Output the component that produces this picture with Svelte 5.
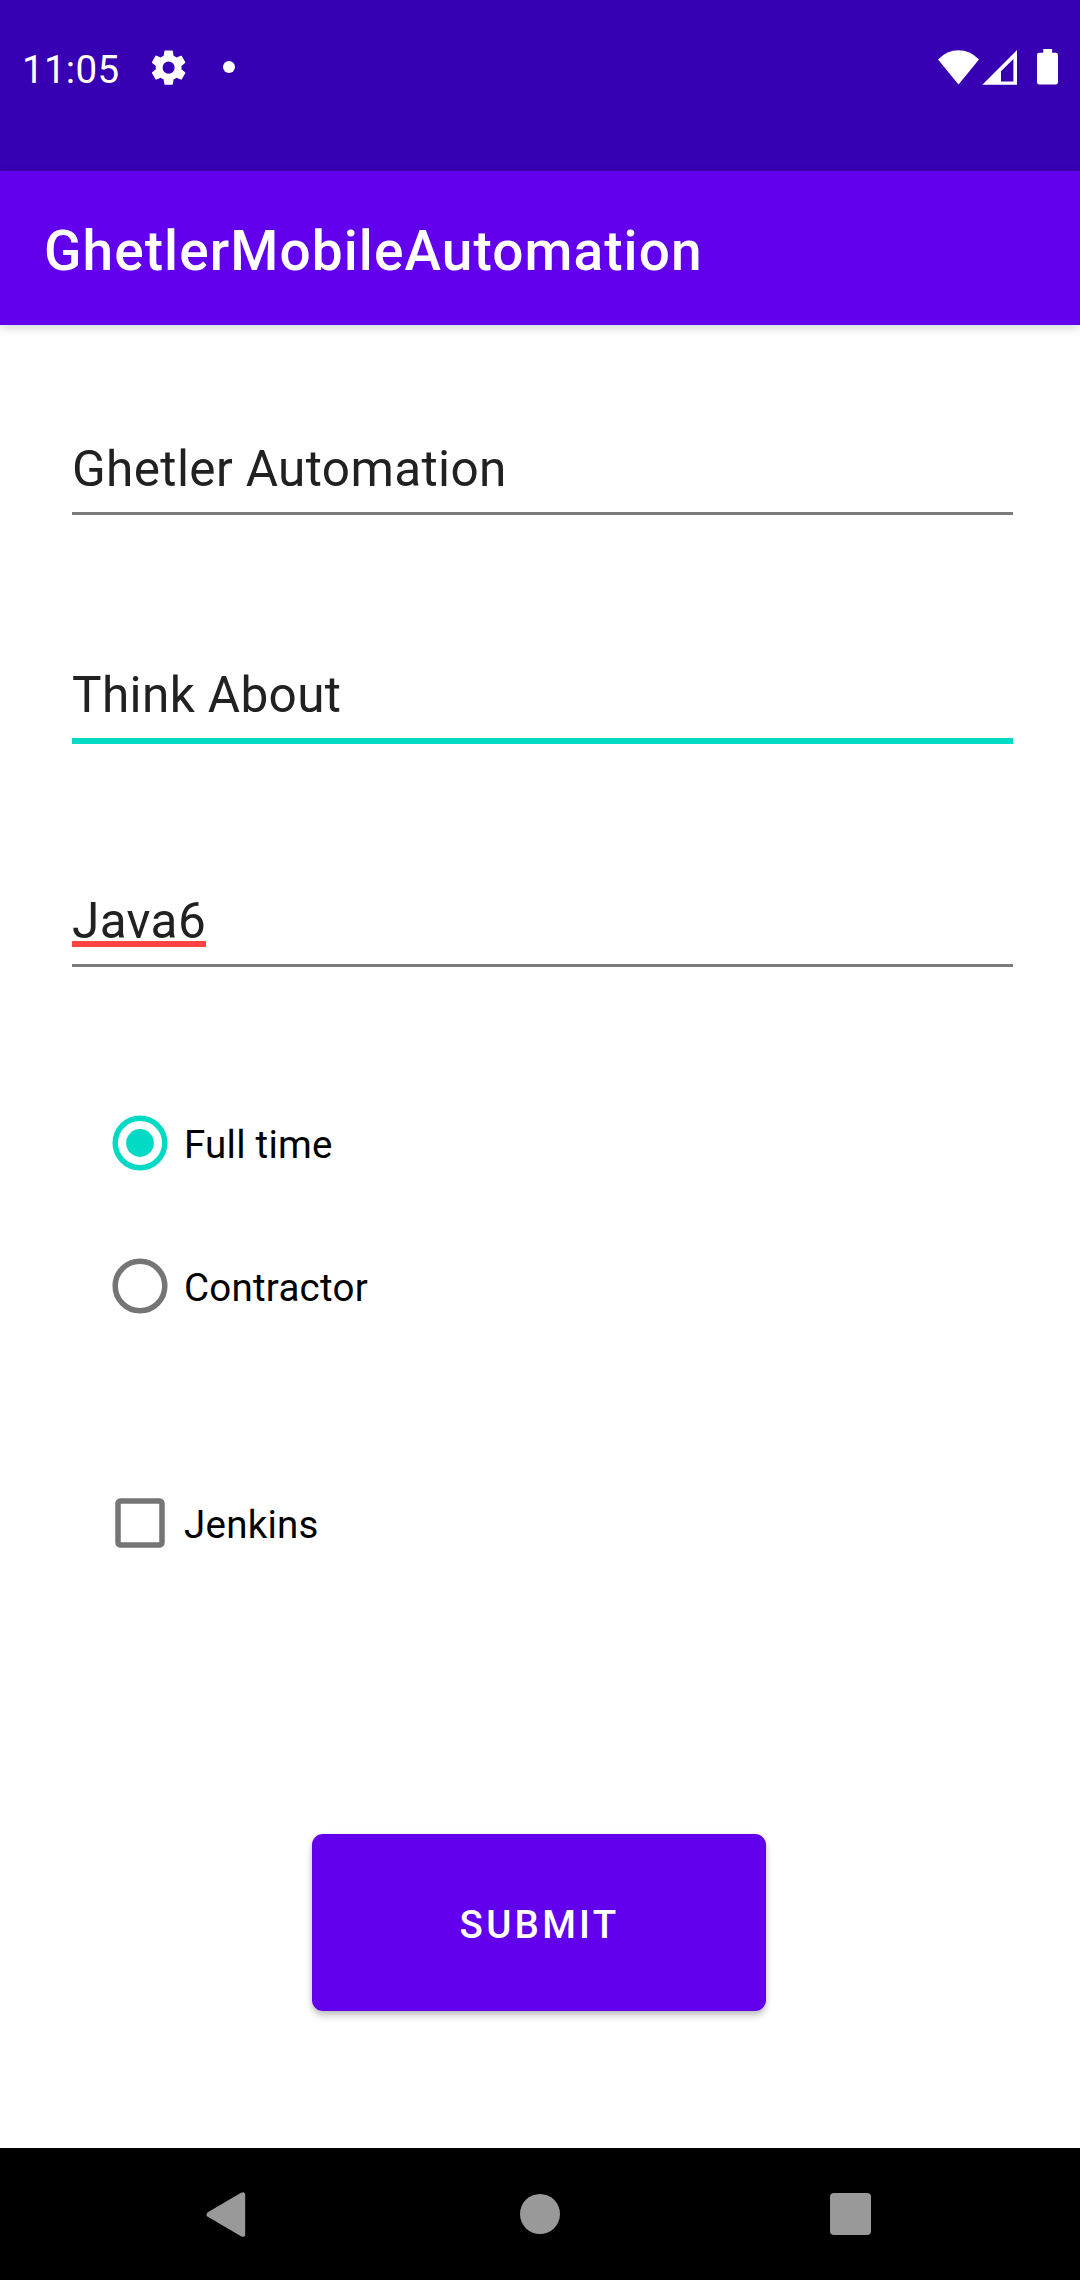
<script>
  const fields = [
    { value: 'Ghetler Automation' },
    { value: 'Think About', focused: true },
    { value: 'Java6', misspelled: true },
  ];
  const contracts = ['Full time', 'Contractor'];
  let selected = $state('Full time');
</script>

<div class="screen">
  <div class="status">
    <span class="clock">11:05</span>
    <svg class="gear" width="41.25" height="41.25" viewBox="0 0 24 24">
      <path fill="#fff" fill-rule="evenodd" d="M19.43 12.98c.04-.32.07-.64.07-.98s-.03-.66-.07-.98l2.11-1.65c.19-.15.24-.42.12-.64l-2-3.46c-.12-.22-.39-.3-.61-.22l-2.49 1c-.52-.4-1.08-.73-1.69-.98l-.38-2.65A.488.488 0 0 0 14 2h-4c-.25 0-.46.18-.49.42l-.38 2.65c-.61.25-1.17.59-1.69.98l-2.49-1c-.23-.09-.49 0-.61.22l-2 3.46c-.13.22-.07.49.12.64l2.11 1.65c-.04.32-.07.65-.07.98s.03.66.07.98l-2.11 1.65c-.19.15-.24.42-.12.64l2 3.46c.12.22.39.3.61.22l2.49-1c.52.4 1.08.73 1.69.98l.38 2.65c.03.24.24.42.49.42h4c.25 0 .46-.18.49-.42l.38-2.65c.61-.25 1.17-.59 1.69-.98l2.49 1c.23.09.49 0 .61-.22l2-3.46c.12-.22.07-.49-.12-.64l-2.11-1.65zM12 15.5a3.5 3.5 0 1 1 0-7 3.5 3.5 0 0 1 0 7z" />
    </svg>
    <span class="dot"></span>
    <svg class="signals" width="122" height="40" viewBox="937 47 122 40">
      <g fill="#fff">
        <path d="M938 59.4Q947 50.3 958.5 50.3T979 59.4L958.5 84.6z" />
        <path fill-rule="evenodd" d="M1017 50v34.7h-34.7zM1013.4 59L1001 71.2v10.2h12.4z" />
        <path d="M1043.3 49h8.8v3.8h3.6q2.3 0 2.3 2.3v27.2q0 2.3-2.3 2.3h-16.4q-2.3 0-2.3-2.3v-27.2q0-2.3 2.3-2.3h4z" />
      </g>
    </svg>
  </div>

  <header class="appbar"><h1>GhetlerMobileAutomation</h1></header>

  <main>
    <div class="fields">
      {#each fields as field}
        <div class="field" class:focused={field.focused}>
          <span class:misspelled={field.misspelled}>{field.value}</span>
        </div>
      {/each}
    </div>

    <div class="radios" role="radiogroup">
      {#each contracts as name}
        <div class="option" class:on={selected === name}>
          <svg width="56" height="56" viewBox="0 0 56 56">
            <circle cx="28" cy="28" r="24.8" fill="none" stroke="currentColor" stroke-width="5.5" />
            {#if selected === name}<circle cx="28" cy="28" r="13.9" fill="currentColor" />{/if}
          </svg>
          <span class="label">{name}</span>
        </div>
      {/each}
    </div>

    <div class="option">
      <svg width="56" height="56" viewBox="0 0 56 56">
        <rect x="6" y="6" width="44" height="44" rx="2.5" fill="none" stroke="currentColor" stroke-width="5.5" />
      </svg>
      <span class="label">Jenkins</span>
    </div>

    <button class="submit">SUBMIT</button>
  </main>

  <nav>
    <svg width="45" height="52" viewBox="203 2188 45 52">
      <path fill="#999" d="M207.4 2212.5L241 2192.8q4.2-2 4.2 2v39.4q0 4-4.2 2L207.4 2216.5q-1.8-2 0-4z" />
    </svg>
    <span class="home"></span>
    <span class="recent"></span>
  </nav>
</div>

<style>
  :global(body) { margin: 0; background: #fff; }
  .screen {
    box-sizing: border-box;
    display: flex;
    flex-direction: column;
    width: 1080px;
    height: 2280px;
    background: #fff;
    font-family: Roboto, sans-serif;
    color: #000;
    overflow: hidden;
  }
  .status {
    box-sizing: border-box;
    display: flex;
    align-items: center;
    height: 171px;
    padding: 0 21px 37px 22px;
    background: #3700b3;
  }
  .clock {
    width: 126px;
    padding-top: 6px;
    font-size: 38.5px;
    line-height: 46px;
    letter-spacing: 0.3px;
    color: #fff;
  }
  .gear { margin-top: 1px; }
  .dot {
    width: 12px;
    height: 12px;
    margin-left: 34px;
    border-radius: 50%;
    background: #fff;
  }
  .signals { margin-left: auto; }
  .appbar {
    box-sizing: border-box;
    display: flex;
    align-items: center;
    height: 154px;
    padding: 6px 44px 0;
    background: #6200ee;
    box-shadow: 0 3px 9px rgba(0, 0, 0, 0.17);
  }
  h1 {
    margin: 0;
    font-size: 55px;
    line-height: 64px;
    font-weight: 500;
    letter-spacing: 1.08px;
    color: #fff;
  }
  main {
    box-sizing: border-box;
    display: flex;
    flex-direction: column;
    height: 1823px;
    padding-top: 114px;
  }
  .fields {
    display: grid;
    grid-template-rows: repeat(3, 226px);
    align-items: start;
    padding: 0 67px 0 72px;
  }
  .field {
    padding-bottom: 13px;
    border-bottom: 3px solid #7a7a7a;
    font-size: 49.5px;
    line-height: 60px;
    letter-spacing: 0.37px;
    color: #212121;
  }
  .field.focused { border-bottom: 6px solid #03dac5; }
  .field span { display: inline-block; height: 60px; vertical-align: top; }
  .misspelled {
    box-sizing: border-box;
    background: linear-gradient(#ff4444, #ff4444) 0 50px / 100% 6px no-repeat;
  }
  .option {
    display: flex;
    align-items: center;
    gap: 16px;
    height: 143px;
    padding-left: 112px;
    color: #757575;
  }
  .option.on { color: #03dac5; }
  .label {
    padding-top: 4px;
    font-size: 38.5px;
    line-height: 46px;
    letter-spacing: 0.25px;
    color: #000;
  }
  .radios { margin-top: -46px; margin-bottom: 94px; }
  .submit {
    width: 454px;
    height: 177px;
    margin: 240px 0 0 312px;
    padding: 5px 0 0 1px;
    border: 0;
    border-radius: 11px;
    background: #6200ee;
    box-shadow: 0 5px 7px rgba(0, 0, 0, 0.2), 0 1px 5px rgba(0, 0, 0, 0.1);
    font: 500 38.5px/46px Roboto, sans-serif;
    letter-spacing: 3.25px;
    color: #fff;
  }
  nav {
    box-sizing: border-box;
    display: flex;
    align-items: center;
    justify-content: space-between;
    height: 132px;
    padding: 0 209px 0 203px;
    background: #000;
  }
  .home, .recent { background: #999; }
  .home { width: 40px; height: 40px; margin-left: 2px; border-radius: 50%; }
  .recent { width: 41px; height: 42px; border-radius: 4px; }
</style>
